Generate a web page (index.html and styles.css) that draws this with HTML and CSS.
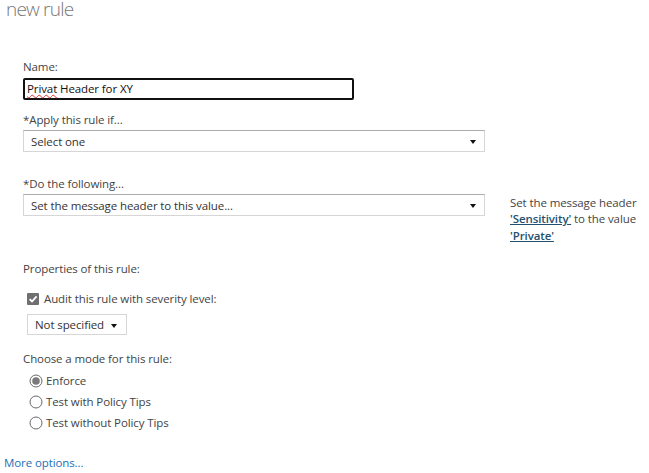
FILE: index.html
```html
<!DOCTYPE html>
<html>
<head>
<meta charset="utf-8">
<link rel="stylesheet" href="styles.css">
</head>
<body>
<h1 class="title">new rule</h1>
<div class="form">
  <div class="label">Name:</div>
  <div class="textbox"><span class="misspelled">Privat</span> Header for XY</div>

  <div class="label gap-apply">*Apply this rule if...</div>
  <div class="select wide"><span>Select one</span><span class="arrow"></span></div>

  <div class="do-row">
    <div class="do-col">
      <div class="label">*Do the following...</div>
      <div class="select wide"><span>Set the message header to this value...</span><span class="arrow"></span></div>
    </div>
    <div class="desc">Set the message header<br><a class="dlink">'Sensitivity'</a> to the value<br><a class="dlink">'Private'</a></div>
  </div>

  <div class="label gap-props">Properties of this rule:</div>
  <div class="check-row">
    <span class="checkbox"><svg width="12" height="12" viewBox="0 0 12 12"><rect x="0" y="0" width="12" height="12" rx="1" fill="#6f6f6f"/><path d="M2.6 6.2 L5 8.5 L9.6 3.4" fill="none" stroke="#fff" stroke-width="1.8"/></svg></span>
    <span>Audit this rule with severity level:</span>
  </div>
  <div class="select small"><span>Not specified</span><span class="arrow"></span></div>

  <div class="label gap-mode">Choose a mode for this rule:</div>
  <div class="radios">
    <div class="radio-row"><svg class="radio" width="14" height="14" viewBox="0 0 14 14"><circle cx="7" cy="7" r="6" fill="#fff" stroke="#6a6a6a" stroke-width="1"/><circle cx="7" cy="7" r="3.8" fill="#7a7a7a"/></svg><span>Enforce</span></div>
    <div class="radio-row"><svg class="radio" width="14" height="14" viewBox="0 0 14 14"><circle cx="7" cy="7" r="6" fill="#fff" stroke="#6a6a6a" stroke-width="1"/></svg><span>Test with Policy Tips</span></div>
    <div class="radio-row"><svg class="radio" width="14" height="14" viewBox="0 0 14 14"><circle cx="7" cy="7" r="6" fill="#fff" stroke="#6a6a6a" stroke-width="1"/></svg><span>Test without Policy Tips</span></div>
  </div>
</div>
<a class="more">More options...</a>
</body>
</html>
```

FILE: styles.css
```css
html, body {
  margin: 0;
  padding: 0;
  background: #fff;
}
body {
  font-family: "Open Sans", "Noto Sans", sans-serif;
  font-size: 11.5px;
  letter-spacing: -0.1px;
  line-height: 16px;
  color: #444;
  width: 649px;
  height: 473px;
  overflow: hidden;
}
.title {
  margin: 0 0 0 6px;
  font-size: 19px;
  line-height: 18px;
  font-weight: 300;
  color: #777;
  letter-spacing: -0.8px;
}
.form {
  padding-left: 23px;
  margin-top: 41px;
  display: flex;
  flex-direction: column;
  align-items: flex-start;
}
.label {
  margin-bottom: 2px;
  color: #444;
}
.textbox {
  margin-top: 1px;
  box-sizing: border-box;
  width: 331px;
  height: 22px;
  border: 2px solid #111;
  border-radius: 2px;
  padding-left: 2px;
  line-height: 18px;
  color: #111;
}
.misspelled {
  text-decoration: underline wavy #e03030;
  text-decoration-thickness: 1px;
  text-underline-offset: 1px;
}
.gap-apply { margin-top: 12px; }
.select {
  box-sizing: border-box;
  height: 22px;
  border: 1px solid #d6d6d6;
  border-top-color: #ababab;
  display: flex;
  align-items: center;
  justify-content: space-between;
  padding: 1px 8px 0 7px;
  color: #333;
}
.select.wide { width: 462px; }
.select.small {
  width: 100px;
  height: 21px;
  margin-left: 4px;
  margin-top: 7px;
  border-top-color: #d6d6d6;
  padding-right: 9px;
}
.arrow {
  width: 0;
  height: 0;
  border-left: 3.5px solid transparent;
  border-right: 3.5px solid transparent;
  border-top: 4px solid #111;
  margin-top: 1px;
}
.do-row {
  margin-top: 24px;
  display: flex;
  align-items: flex-end;
  gap: 25px;
}
.do-col {
  display: flex;
  flex-direction: column;
}
.desc {
  line-height: 16.5px;
  color: #444;
  margin-bottom: -28px;
}
.dlink {
  color: #24506e;
  font-weight: 600;
  text-decoration: underline;
}
.gap-props { margin-top: 45px; }
.check-row {
  margin-top: 12px;
  margin-left: 4px;
  display: flex;
  align-items: center;
  gap: 5px;
  color: #444;
}
.checkbox {
  display: flex;
  width: 12px;
  height: 12px;
}
.gap-mode { margin-top: 16px; }
.radios {
  margin-top: 1px;
  display: flex;
  flex-direction: column;
}
.radio-row {
  height: 21px;
  display: flex;
  align-items: center;
  gap: 3px;
  margin-left: 6px;
  color: #444;
}
.more {
  display: block;
  margin-top: 22px;
  margin-left: 4px;
  color: #1d6fb8;
}
```
